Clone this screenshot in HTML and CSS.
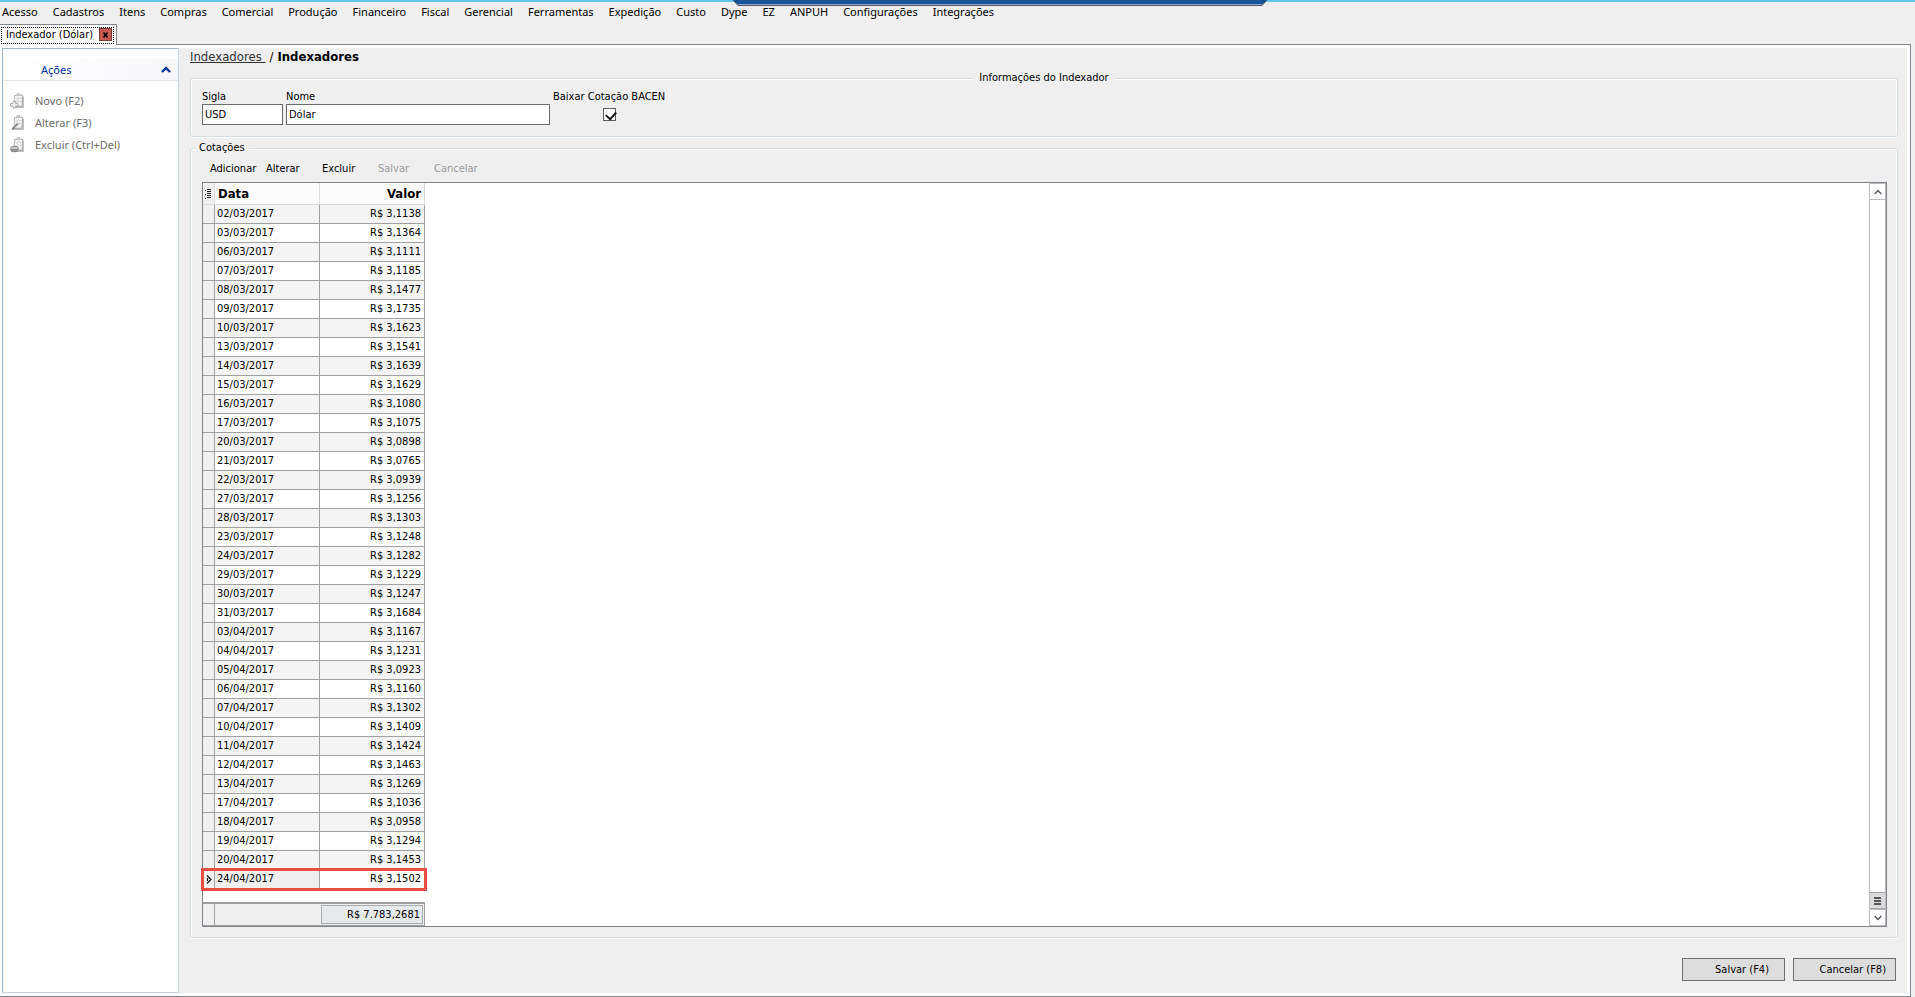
FILE: index.html
```
<!DOCTYPE html>
<html lang="pt-BR">
<head>
<meta charset="utf-8">
<title>Indexador (Dólar)</title>
<link rel="stylesheet" href="styles.css">
</head>
<body>
<svg class="defs" aria-hidden="true">
  <symbol id="clip" viewBox="0 0 15 16">
    <path d="M4.500 2.500L12.500 2L12 13L4 13.500Z" fill="#f4f4f4" stroke="#b9b9b9"/>
    <path d="M7 .5h3v2H6.500z" fill="#d0d0d0" stroke="#bcbcbc" stroke-width=".6"/>
    <path d="M6 5.500l1 1 1.500-2M9.500 5.500h1.500M6 8.500l1 1 1.500-2M9.500 8.500h1.500" fill="none" stroke="#c0c0c0"/>
    <path d="M13 3.500v10.500H3" fill="none" stroke="#a5a5a5" stroke-width="1.400"/>
  </symbol>
</svg>
<div class="app">
  <svg class="rdp" viewBox="0 0 534 6" preserveAspectRatio="none" aria-hidden="true">
    <path d="M0 0H534L529 5.500H5Z" fill="#1a5296"/>
    <path d="M4 4.500H530" stroke="#8fa9cd"/>
    <path d="M0 0L5 5.500H529L534 0" fill="none" stroke="#54575e"/>
  </svg>
  <nav class="menu">
    <button>Acesso</button><button>Cadastros</button><button>Itens</button><button>Compras</button><button>Comercial</button><button>Produção</button><button>Financeiro</button><button>Fiscal</button><button>Gerencial</button><button>Ferramentas</button><button>Expedição</button><button>Custo</button><button>Dype</button><button>EZ</button><button>ANPUH</button><button>Configurações</button><button>Integrações</button>
  </nav>
  <div class="tabs">
    <div class="tab"><div class="tab-in"><span>Indexador (Dólar)</span><button class="close" aria-label="Fechar"><svg width="5" height="6" viewBox="0 0 5 6"><path d="M.5 .5L4.500 5.500M4.500 .5L.5 5.500" stroke="#000" stroke-width="1.600"/></svg></button></div></div>
  </div>
  <div class="page">
    <aside class="side">
      <h2 class="side-head"><span>Ações</span><svg width="10" height="7" viewBox="0 0 10 7"><path d="M1 6L5 2L9 6" fill="none" stroke="#003399" stroke-width="2.400"/></svg></h2>
      <div class="actions">
        <button><svg width="15" height="16"><use href="#clip"/><path d="M.5 10.500h2.500v-2h2.500v2h2.500v2.500h-2.500v2h-2.500v-2h-2.500z" fill="#f0f0f0" stroke="#aaa" stroke-width=".9"/></svg>Novo (F2)</button>
        <button><svg width="15" height="16"><use href="#clip"/><path d="M2 14.500L8 8.500" stroke="#8d8d8d" stroke-width="2"/></svg>Alterar (F3)</button>
        <button><svg width="15" height="16"><use href="#clip"/><ellipse cx="4.500" cy="12" rx="4.300" ry="3.200" fill="#8e8e8e"/><path d="M1.500 11h6" stroke="#ddd" stroke-width="1.600"/></svg>Excluir (Ctrl+Del)</button>
      </div>
    </aside>
    <main class="main">
      <div class="crumbs"><a href="#">Indexadores&nbsp;</a><span>/</span><b>Indexadores</b></div>
      <fieldset class="box info">
        <legend>Informações do Indexador</legend>
        <div class="field sigla"><label for="sigla">Sigla</label><input type="text" id="sigla" value="USD"></div>
        <div class="field nome"><label for="nome">Nome</label><input type="text" id="nome" value="Dólar"></div>
        <div class="field check"><label for="bacen">Baixar Cotação BACEN</label><input type="checkbox" id="bacen" checked></div>
      </fieldset>
      <fieldset class="box quotes">
        <legend>Cotações</legend>
        <div class="tools"><button>Adicionar</button><button>Alterar</button><button>Excluir</button><button disabled>Salvar</button><button disabled>Cancelar</button></div>
        <div class="grid">
          <div class="grid-body">
            <table class="data">
              <thead><tr><th class="ind"><svg width="7" height="10" viewBox="0 0 7 10"><path d="M0 1.500h1M0 5.500h1M0 9.500h1M2 .5h4M2 2.500h4M2 4.500h4M2 6.500h4M2 8.500h4" stroke="#222"/></svg></th><th>Data</th><th class="num">Valor</th></tr></thead>
              <tbody id="rows"></tbody>
            </table>
            <table class="foot"><tbody><tr><td class="ind"></td><td class="date"></td><td class="num"><output>R$ 7.783,2681</output></td></tr></tbody></table>
          </div>
          <div class="scroll">
            <button aria-label="Subir"><svg width="8" height="6" viewBox="0 0 8 6"><path d="M.7 5L4 1.500L7.300 5" fill="none" stroke="#555" stroke-width="1.400"/></svg></button>
            <span class="track"></span>
            <button class="thumb" aria-label="Posição"><svg width="7" height="8" viewBox="0 0 7 8"><path d="M0 1h7M0 4h7M0 7h7" stroke="#555" stroke-width="2"/></svg></button>
            <button aria-label="Descer"><svg width="8" height="6" viewBox="0 0 8 6"><path d="M.7 1L4 4.500L7.300 1" fill="none" stroke="#555" stroke-width="1.400"/></svg></button>
          </div>
        </div>
      </fieldset>
      <div class="buttons"><button>Salvar (F4)</button><button>Cancelar (F8)</button></div>
    </main>
  </div>
</div>
<script src="rows.js"></script>
</body>
</html>
```
FILE: rows.js
```
const quotes = [
  ["02/03/2017", "3,1138"], ["03/03/2017", "3,1364"], ["06/03/2017", "3,1111"], ["07/03/2017", "3,1185"],
  ["08/03/2017", "3,1477"], ["09/03/2017", "3,1735"], ["10/03/2017", "3,1623"], ["13/03/2017", "3,1541"],
  ["14/03/2017", "3,1639"], ["15/03/2017", "3,1629"], ["16/03/2017", "3,1080"], ["17/03/2017", "3,1075"],
  ["20/03/2017", "3,0898"], ["21/03/2017", "3,0765"], ["22/03/2017", "3,0939"], ["27/03/2017", "3,1256"],
  ["28/03/2017", "3,1303"], ["23/03/2017", "3,1248"], ["24/03/2017", "3,1282"], ["29/03/2017", "3,1229"],
  ["30/03/2017", "3,1247"], ["31/03/2017", "3,1684"], ["03/04/2017", "3,1167"], ["04/04/2017", "3,1231"],
  ["05/04/2017", "3,0923"], ["06/04/2017", "3,1160"], ["07/04/2017", "3,1302"], ["10/04/2017", "3,1409"],
  ["11/04/2017", "3,1424"], ["12/04/2017", "3,1463"], ["13/04/2017", "3,1269"], ["17/04/2017", "3,1036"],
  ["18/04/2017", "3,0958"], ["19/04/2017", "3,1294"], ["20/04/2017", "3,1453"], ["24/04/2017", "3,1502"]
];
const marker = '<svg width="6" height="9" viewBox="0 0 6 9"><path d="M1 .5L5 4.500L1 8.500M1.500 3v3" fill="none" stroke="#111" stroke-width="1.200"/></svg>';
document.getElementById("rows").innerHTML = quotes.map(([date, value], i) => {
  const current = i === quotes.length - 1;
  return `<tr${current ? ' class="current"' : ""}><td class="ind">${current ? marker : ""}</td><td>${date}</td><td class="num">R$ ${value}</td></tr>`;
}).join("");
```
FILE: styles.css
```
* { box-sizing: border-box; }
body {
  margin: 0;
  background: #efefef;
  color: #000;
  font: 11px/14px Tahoma, "DejaVu Sans Condensed", "DejaVu Sans", sans-serif;
}
button, input { font: inherit; color: inherit; margin: 0; padding: 0; border-radius: 0; }
button { background: none; border: 0; }
svg { display: block; }
.defs { position: absolute; width: 0; height: 0; }

.app {
  position: relative;
  display: flex;
  flex-direction: column;
  min-height: 100vh;
  border-top: 2px solid #62c9ea;
}
.rdp { position: absolute; top: -2px; left: 50%; width: 534px; height: 6px; margin-left: -225px; }

.menu {
  display: flex;
  gap: 15px;
  height: 22px;
  padding: 0 2px 2px;
  font: 11px/20px "Segoe UI", "Noto Sans", sans-serif;
}

.tabs { display: flex; height: 20px; }
.tab {
  position: relative;
  height: 21px;
  padding: 2px 2px 2px 1px;
  background: #fff;
  border-top: 1px solid #838790;
  border-right: 1px solid #838790;
}
.tab-in {
  display: flex;
  gap: 6px;
  height: 17px;
  padding: 0 1px 0 4px;
  border: 1px dotted #000;
}
.close {
  display: flex;
  align-items: center;
  justify-content: center;
  width: 13px;
  height: 13px;
  background: #c75b52;
  border: 1px solid #7c3a35;
}

.page {
  flex: 1;
  display: flex;
  margin-right: 4px;
  padding: 3px 3px 3px 2px;
  background: #fff;
  border: solid #838790;
  border-width: 1px 1px 1px 0;
}
.side {
  width: 177px;
  border: 1px solid #c3d5e2;
  border-left-color: #9fb4c4;
  border-top-color: #9fb4c4;
  font: 11px/16px "Segoe UI", "Noto Sans", sans-serif;
}
.side-head {
  display: flex;
  align-items: center;
  justify-content: space-between;
  height: 22px;
  margin: 10px 0 0;
  padding: 0 7px 0 38px;
  background: linear-gradient(90deg, #fff, #f7f7fa);
  border-bottom: 1px solid #e2e2e4;
  color: #003399;
  font: inherit;
}
.actions { padding-top: 9px; }
.actions button {
  display: flex;
  align-items: center;
  gap: 10px;
  width: 100%;
  height: 22px;
  padding-left: 7px;
  color: #6d6d6d;
}

.main {
  flex: 1;
  display: flex;
  flex-direction: column;
  padding: 0 9px 12px 11px;
  background: #efefef;
}
.crumbs { display: flex; gap: 4px; height: 22px; font-size: 13px; line-height: 17px; }
.crumbs a { color: #333; }

.box {
  min-width: 0;
  margin: 0;
  padding: 0 10px;
  border: 1px solid #d5dde4;
  border-radius: 3px;
  box-shadow: inset 1px 1px #fff, inset -1px 0 #fff, 0 1px #fff;
}
.box legend { padding: 0 4px; background: #efefef; line-height: 16px; }
.info {
  display: flex;
  gap: 3px;
  height: 67px;
}
.info legend { margin: 0 auto; padding: 0 6px; }
.field { display: flex; flex-direction: column; padding-top: 4px; }
.field input[type="text"] {
  width: 100%;
  height: 21px;
  padding: 0 2px;
  background: #fff;
  border: 1px solid #6b6b6b;
}
.sigla { width: 81px; margin-left: 1px; }
.nome { width: 264px; }
.check { align-items: center; gap: 4px; }
.check input {
  appearance: none;
  width: 13px;
  height: 13px;
  background: #fff;
  border: 1px solid #5c5c5c;
}
.check input:checked::before {
  content: "";
  display: block;
  width: 8px;
  height: 5px;
  margin: 2px;
  border: solid #1c1c1c;
  border-width: 0 0 2px 2px;
  rotate: -48deg;
}

.quotes {
  flex: 1;
  display: flex;
  flex-direction: column;
  margin-top: 3px;
  padding: 0 10px 10px 11px;
}
.quotes legend { margin-left: -7px; }
.tools { display: flex; height: 26px; padding-left: 8px; }
.tools button { width: 56px; text-align: left; white-space: nowrap; }
.tools button:disabled { color: #9b9b9b; }

.grid {
  flex: 1;
  display: flex;
  justify-content: space-between;
  background: #fff;
  border: 1px solid #7f848c;
}
.grid-body { display: flex; flex-direction: column; justify-content: space-between; gap: 13px; }
.data, .foot { width: 222px; border-collapse: separate; border-spacing: 0; table-layout: fixed; }
.grid th, .grid td {
  height: 19px;
  padding: 0 1px 0 2px;
  border: solid #a0a0a0;
  border-width: 0 1px 1px 0;
  text-align: left;
}
.grid .ind { width: 12px; padding: 0; background: #f0f0f0; }
.ind svg { margin: 0 auto; }
.grid .num { width: 105px; padding-right: 3px; text-align: right; }
.grid th {
  height: 22px;
  padding-left: 3px;
  background: #fcfcfc;
  border-color: #dcdcdc;
  font-size: 13px;
  line-height: 17px;
}
.data tbody tr:nth-child(odd) { background: #f4f4f4; }
.current { outline: 3px solid #ea4b43; outline-offset: -1px; }
.current td:nth-child(2) { background: #efefef; }
.foot { border-top: 2px solid #a0a0a0; background: #efefef; }
.grid .foot td { height: 22px; }
.grid .foot .date { border-right: 0; }
.grid .foot .num { padding: 1px; }
.foot output {
  display: block;
  height: 19px;
  padding-right: 2px;
  background: #e6eaea;
  border: 1px solid #a9adad;
  line-height: 18px;
}

.scroll { display: flex; flex-direction: column; width: 17px; border: solid #bcbcc0; border-width: 0 1px; }
.scroll button {
  display: flex;
  align-items: center;
  justify-content: center;
  height: 17px;
  border: solid #bcbcc0;
  border-width: 1px 0;
}
.track { flex: 1; }
.scroll .thumb { background: #dadada; border-color: #a0a0a0; }

.buttons { display: flex; justify-content: flex-end; gap: 8px; margin: 20px 2px 0 0; }
.buttons button {
  width: 103px;
  height: 23px;
  padding-right: 9px;
  background: #dddddd;
  border: 1px solid #6f6f6f;
  text-align: right;
}
.buttons button:first-child { padding-right: 15px; }
```
